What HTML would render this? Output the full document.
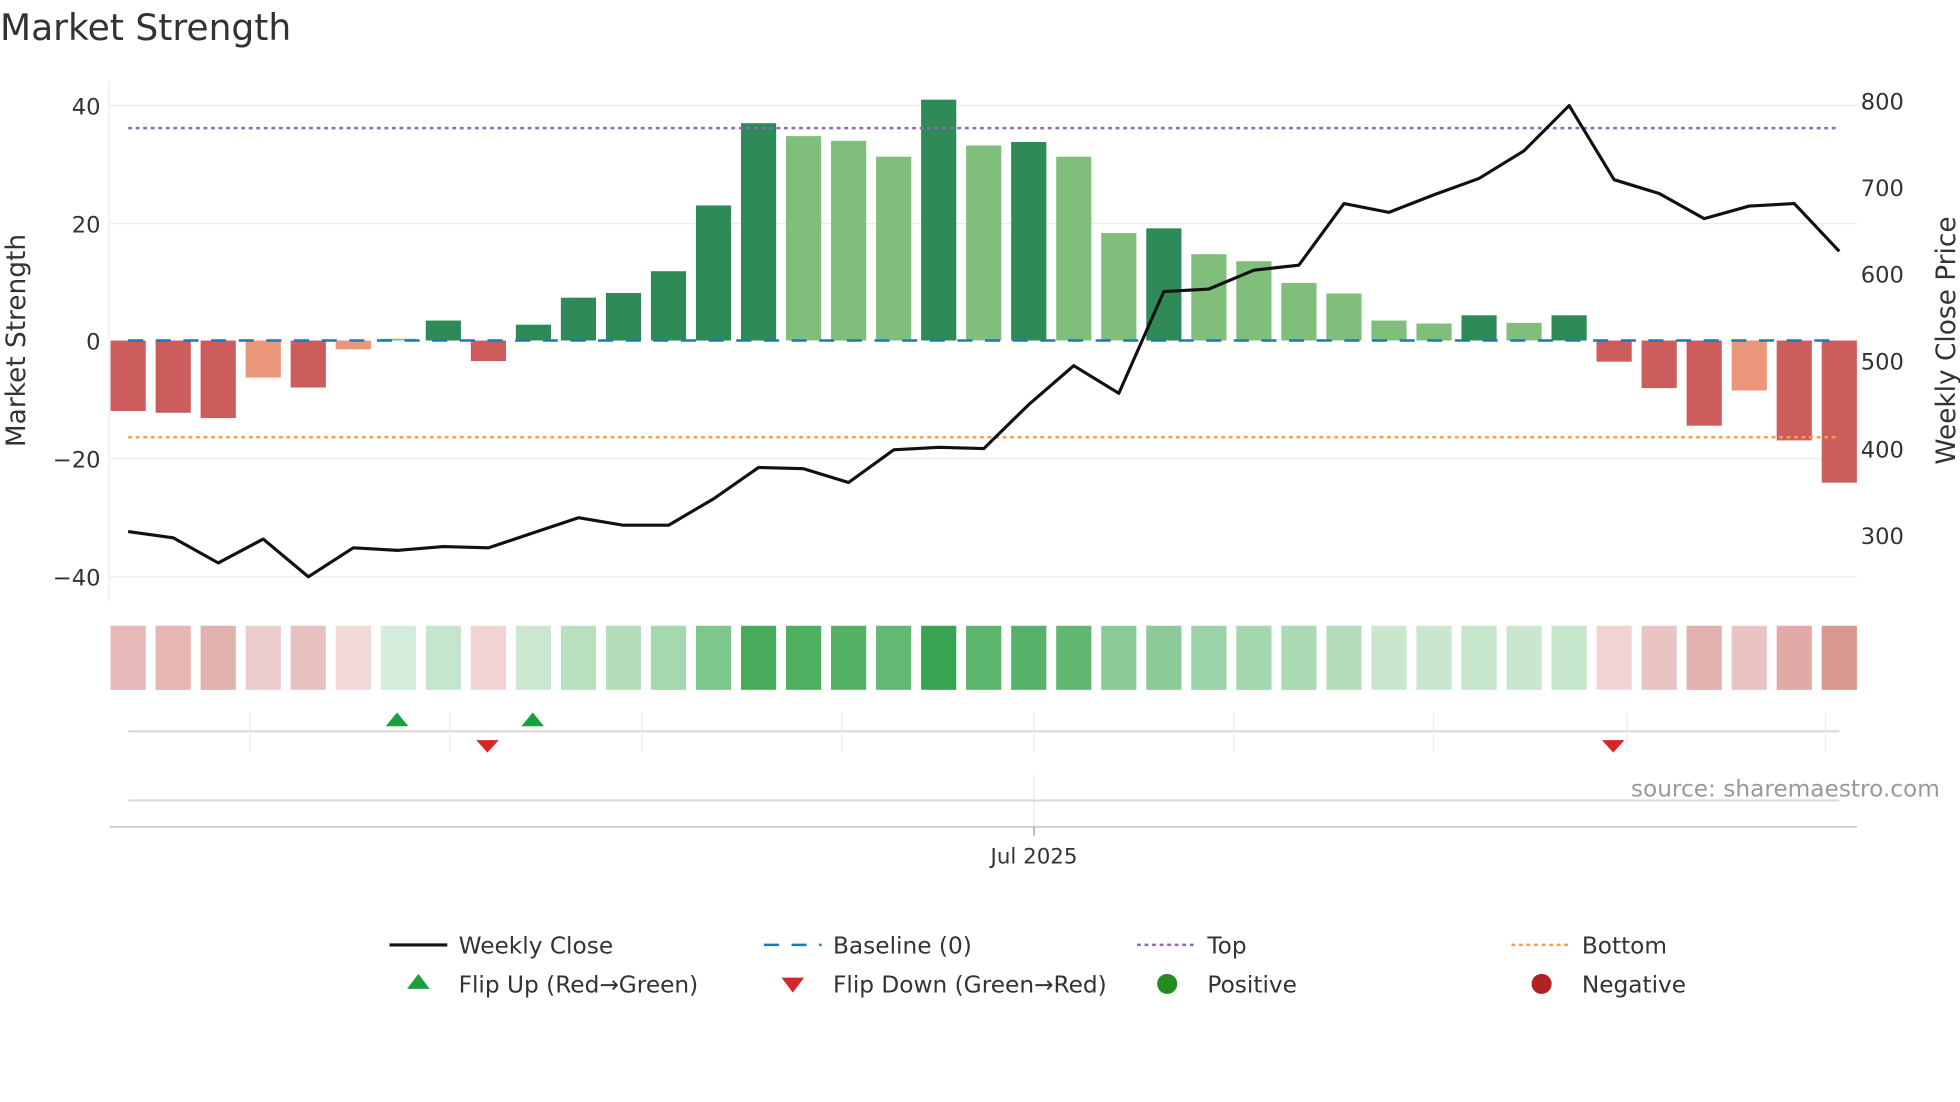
<!DOCTYPE html>
<html><head><meta charset="utf-8"><style>
html,body{margin:0;padding:0;background:#fff;}
svg{display:block;}
text{font-family:"DejaVu Sans","Liberation Sans",sans-serif;fill:#333;}
</style></head><body>
<svg id="s" width="1960" height="1102" viewBox="0 0 1560 877" preserveAspectRatio="none" xmlns="http://www.w3.org/2000/svg">
<rect width="1560" height="877" fill="#fff"/>
<text x="0" y="32" font-size="28.7" fill="#333">Market Strength</text>
<g stroke="#ececec" stroke-width="1">
<line x1="87" y1="84" x2="1478" y2="84"/><line x1="87" y1="178" x2="1478" y2="178"/>
<line x1="87" y1="365" x2="1478" y2="365"/><line x1="87" y1="459" x2="1478" y2="459"/>
<line x1="87" y1="65" x2="87" y2="478"/>
</g>
<g font-size="18" text-anchor="end">
<text x="80" y="91">40</text><text x="80" y="185">20</text><text x="80" y="278">0</text>
<text x="80" y="372">−20</text><text x="80" y="466">−40</text>
</g>
<g font-size="18">
<text x="1481" y="87">800</text><text x="1481" y="156">700</text><text x="1481" y="225">600</text>
<text x="1481" y="294">500</text><text x="1481" y="364">400</text><text x="1481" y="433">300</text>
</g>
<text transform="translate(20,271) rotate(-90)" font-size="21" text-anchor="middle">Market Strength</text>
<text transform="translate(1556,271) rotate(-90)" font-size="21" text-anchor="middle">Weekly Close Price</text>
<g id="bars"></g>
<line x1="102" y1="271" x2="1464" y2="271" stroke="#1f77b4" stroke-width="2" stroke-dasharray="12,10"/>
<line x1="102" y1="102" x2="1464" y2="102" stroke="#9467bd" stroke-width="2" stroke-dasharray="3,3"/>
<line x1="102" y1="348" x2="1464" y2="348" stroke="#f0a050" stroke-width="2" stroke-dasharray="3,3"/>
<polyline id="pl" fill="none" stroke="#111" stroke-width="2.5" stroke-linejoin="round"/>
<g id="heat"></g>
<line x1="102" y1="582" x2="1464" y2="582" stroke="#d6d6d6" stroke-width="1.5"/>
<g stroke="#ececec" stroke-width="1">
<line x1="199" y1="568" x2="199" y2="598"/><line x1="358" y1="568" x2="358" y2="598"/>
<line x1="511" y1="568" x2="511" y2="598"/><line x1="670" y1="568" x2="670" y2="598"/>
<line x1="823" y1="568" x2="823" y2="598"/><line x1="982" y1="568" x2="982" y2="598"/>
<line x1="1141" y1="568" x2="1141" y2="598"/><line x1="1295" y1="568" x2="1295" y2="598"/>
<line x1="1453" y1="568" x2="1453" y2="598"/>
<line x1="823" y1="617" x2="823" y2="657"/>
</g>
<g fill="#1a9e3f"><polygon points="307,578 316,567 325,578"/><polygon points="415,578 424,567 433,578"/></g>
<g fill="#d62728"><polygon points="379,589 397,589 388,599"/><polygon points="1275,589 1293,589 1284,599"/></g>
<line x1="102" y1="637" x2="1464" y2="637" stroke="#d6d6d6" stroke-width="1.5"/>
<text x="1544" y="634" font-size="18.5" text-anchor="end" style="fill:#999">source: sharemaestro.com</text>
<line x1="87" y1="658" x2="1478" y2="658" stroke="#cfcfcf" stroke-width="1.5"/>
<line x1="823" y1="658" x2="823" y2="665" stroke="#999" stroke-width="1"/>
<text x="823" y="687" font-size="17" text-anchor="middle">Jul 2025</text>
<g font-size="18.5">
<line x1="310" y1="752" x2="356" y2="752" stroke="#111" stroke-width="2.5"/><text x="365" y="759">Weekly Close</text>
<line x1="608" y1="752" x2="654" y2="752" stroke="#1f77b4" stroke-width="2" stroke-dasharray="12,10"/><text x="663" y="759">Baseline (0)</text>
<line x1="905" y1="752" x2="951" y2="752" stroke="#9467bd" stroke-width="2" stroke-dasharray="3,3"/><text x="961" y="759">Top</text>
<line x1="1203" y1="752" x2="1249" y2="752" stroke="#f0a050" stroke-width="2" stroke-dasharray="3,3"/><text x="1259" y="759">Bottom</text>
<polygon points="324,787 333,775 342,787" fill="#1a9e3f"/><text x="365" y="790">Flip Up (Red→Green)</text>
<polygon points="622,778 640,778 631,790" fill="#d62728"/><text x="663" y="790">Flip Down (Green→Red)</text>
<circle cx="929" cy="783" r="8" fill="#228b22"/><text x="961" y="790">Positive</text>
<circle cx="1227" cy="783" r="8" fill="#b22222"/><text x="1259" y="790">Negative</text>
</g>
</svg>
<script>
var v=[-12,-12.3,-13.2,-6.3,-8,-1.5,0.3,3.4,-3.5,2.7,7.3,8.1,11.8,23,37,34.8,34,31.3,41,33.2,33.8,31.3,18.3,19.1,14.7,13.5,9.8,8,3.4,2.9,4.3,3,4.3,-3.6,-8.1,-14.5,-8.5,-17,-24.2];
var t="rrroro"+"l"+"d"+"r"+"dddddd"+"lll"+"d"+"l"+"d"+"ll"+"d"+"llllll"+"d"+"l"+"d"+"rrr"+"o"+"rr";
var col={d:"#2e8b57",l:"#7fbf7b",r:"#cd5c5c",o:"#e9967a"};
var hc=["#e6b8b8","#e6b5b4","#e3b1ad","#edcccc","#e8c2c0","#f2d8d6","#d4ecdb","#c5e6cc","#f2d3d2","#cbe7cf","#b8e0bf","#b3deb9","#a6d8af","#7dc68c","#48ab5c","#4db060","#55b265","#63b873","#38a552","#5bb56c","#56b268","#62b872","#8bcb98","#8ccb98","#9cd2a7","#a3d6ad","#aad9b3","#b4ddbb","#c8e7cd","#c8e7ce","#c5e6cb","#c9e7cf","#c6e6cc","#f2d3d3","#e9c4c3","#e3b1ad","#e9c4c3","#e1a9a7","#d99792"];
var py=[423,428,448,429,459,436,438,435,436,424,412,418,418,397,372,373,384,358,356,357,322,291,313,232,230,215,211,162,169,155,142,120,84,143,154,174,164,162,200];
var ns="http://www.w3.org/2000/svg",b=document.getElementById("bars"),h=document.getElementById("heat"),pts=[];
for(var i=0;i<39;i++){var cx=102+i*35.84;
var r=document.createElementNS(ns,"rect");var y0=271,y1=271-v[i]*4.675;
r.setAttribute("x",cx-14);r.setAttribute("width",28);r.setAttribute("y",Math.min(y0,y1));r.setAttribute("height",Math.abs(y1-y0));r.setAttribute("fill",col[t[i]]);b.appendChild(r);
var q=document.createElementNS(ns,"rect");q.setAttribute("x",cx-14);q.setAttribute("width",28);q.setAttribute("y",498);q.setAttribute("height",51);q.setAttribute("fill",hc[i]);h.appendChild(q);
pts.push(cx.toFixed(1)+","+py[i]);}
document.getElementById("pl").setAttribute("points",pts.join(" "));
</script>
</body></html>
